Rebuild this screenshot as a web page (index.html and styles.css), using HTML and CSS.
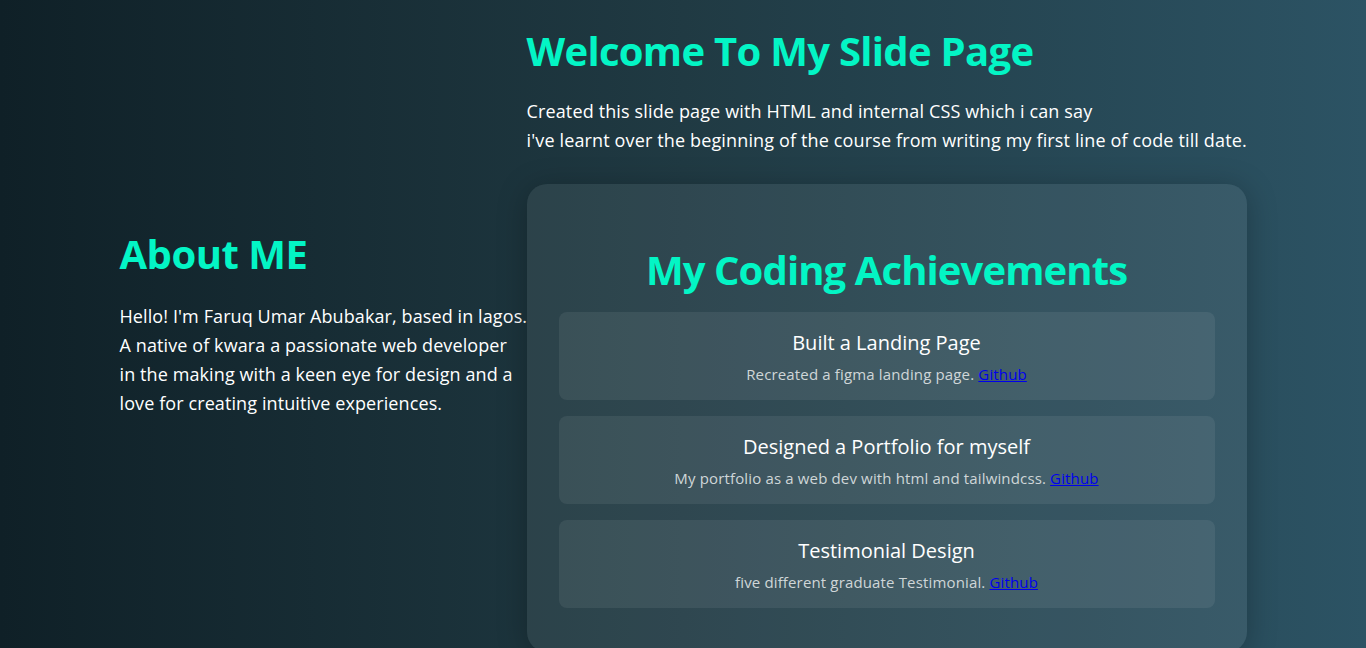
FILE: index.html
```html
<!DOCTYPE html>
<html lang="en">
<head>
<meta charset="utf-8">
<title>Slide Page</title>
<link rel="stylesheet" href="styles.css">
</head>
<body>
<main class="page">
  <section class="about">
    <h2 class="about-title">About ME</h2>
    <p class="about-text">Hello! I'm Faruq Umar Abubakar, based in lagos.<br>A native of kwara a passionate web developer<br>in the making with a keen eye for design and a<br>love for creating intuitive experiences.</p>
  </section>
  <section class="main">
    <h1 class="main-title">Welcome To My Slide Page</h1>
    <p class="intro">Created this slide page with HTML and internal CSS which i can say<br>i've learnt over the beginning of the course from writing my first line of code till date.</p>
    <div class="card">
      <h2 class="card-title">My Coding Achievements</h2>
      <div class="items">
        <div class="item">
          <h3 class="item-title">Built a Landing Page</h3>
          <p class="item-text">Recreated a figma landing page. <a href="#">Github</a></p>
        </div>
        <div class="item">
          <h3 class="item-title">Designed a Portfolio for myself</h3>
          <p class="item-text">My portfolio as a web dev with html and tailwindcss. <a href="#">Github</a></p>
        </div>
        <div class="item">
          <h3 class="item-title">Testimonial Design</h3>
          <p class="item-text">five different graduate Testimonial. <a href="#">Github</a></p>
        </div>
      </div>
    </div>
  </section>
</main>
</body>
</html>
```

FILE: styles.css
```css
html, body {
  margin: 0;
  padding: 0;
}
body {
  font-family: "Open Sans", Lato, sans-serif;
  color: #ffffff;
  background: linear-gradient(to right, #0f2027, #203a43, #2c5364);
  min-height: 100vh;
  overflow: hidden;
}
.page {
  display: flex;
  justify-content: center;
  align-items: flex-start;
  min-height: 100vh;
}
.about {
  width: 407px;
  align-self: center;
  white-space: nowrap;
  padding-bottom: 7px;
}
.about-title {
  color: #03f5c5;
  font-size: 40px;
  font-weight: 700;
  margin: 0 0 22px;
  line-height: 1.3;
  letter-spacing: -0.5px;
}
.about-text {
  font-size: 18px;
  line-height: 29px;
  margin: 0;
  letter-spacing: 0.1px;
}
.main {
  width: 720px;
  padding-top: 25px;
}
.main-title {
  color: #03f5c5;
  font-size: 40px;
  font-weight: 700;
  line-height: 1.3;
  margin: 0 0 20px;
  letter-spacing: -0.7px;
}
.intro {
  font-size: 18px;
  line-height: 29px;
  margin: 0 0 29px;
  white-space: nowrap;
  letter-spacing: 0.14px;
}
.card {
  background: rgba(255, 255, 255, 0.07);
  border-radius: 20px;
  box-shadow: 0 4px 30px rgba(0, 0, 0, 0.25);
  padding: 60px 32px 44px;
}
.card-title {
  color: #03f5c5;
  text-align: center;
  font-size: 40px;
  font-weight: 700;
  line-height: 1.3;
  margin: 0 0 16px;
  letter-spacing: -0.9px;
}
.items {
  display: flex;
  flex-direction: column;
  gap: 16px;
}
.item {
  background: rgba(255, 255, 255, 0.07);
  border-radius: 8px;
  height: 88px;
  box-sizing: border-box;
  padding: 17px 16px 0;
  text-align: center;
}
.item-title {
  font-size: 20px;
  font-weight: 400;
  margin: 0 0 6px;
  line-height: 28px;
}
.item-text {
  font-size: 15px;
  color: #cfd6d8;
  margin: 0;
  line-height: 22px;
  letter-spacing: 0.15px;
}
.item-text a {
  color: #0000ee;
}
```
